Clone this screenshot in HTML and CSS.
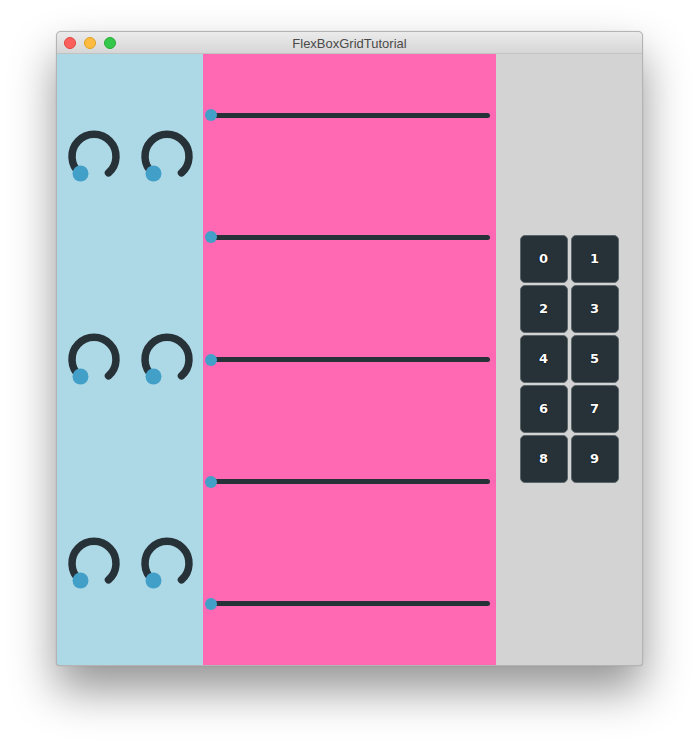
FILE: index.html
```html
<!DOCTYPE html>
<html>
<head>
<meta charset="utf-8">
<title>FlexBoxGridTutorial</title>
<link rel="stylesheet" href="styles.css">
</head>
<body>
<div class="window">
  <div class="titlebar">
    <div class="lights">
      <span class="light red"></span>
      <span class="light yellow"></span>
      <span class="light green"></span>
    </div>
    <div class="title">FlexBoxGridTutorial</div>
  </div>
  <div class="content">
    <div class="col knobs">
      <div class="cell"><svg class="knob" viewBox="0 0 60 60" width="60" height="60"><path d="M15.5 46.9 A22 22 0 1 1 44.5 46.9" /><circle cx="16.5" cy="47.5" r="8"/></svg></div>
      <div class="cell"><svg class="knob" viewBox="0 0 60 60" width="60" height="60"><path d="M15.5 46.9 A22 22 0 1 1 44.5 46.9" /><circle cx="16.5" cy="47.5" r="8"/></svg></div>
      <div class="cell"><svg class="knob" viewBox="0 0 60 60" width="60" height="60"><path d="M15.5 46.9 A22 22 0 1 1 44.5 46.9" /><circle cx="16.5" cy="47.5" r="8"/></svg></div>
      <div class="cell"><svg class="knob" viewBox="0 0 60 60" width="60" height="60"><path d="M15.5 46.9 A22 22 0 1 1 44.5 46.9" /><circle cx="16.5" cy="47.5" r="8"/></svg></div>
      <div class="cell"><svg class="knob" viewBox="0 0 60 60" width="60" height="60"><path d="M15.5 46.9 A22 22 0 1 1 44.5 46.9" /><circle cx="16.5" cy="47.5" r="8"/></svg></div>
      <div class="cell"><svg class="knob" viewBox="0 0 60 60" width="60" height="60"><path d="M15.5 46.9 A22 22 0 1 1 44.5 46.9" /><circle cx="16.5" cy="47.5" r="8"/></svg></div>
    </div>
    <div class="col sliders">
      <div class="slot"><div class="slider"><div class="track"></div><div class="thumb"></div></div></div>
      <div class="slot"><div class="slider"><div class="track"></div><div class="thumb"></div></div></div>
      <div class="slot"><div class="slider"><div class="track"></div><div class="thumb"></div></div></div>
      <div class="slot"><div class="slider"><div class="track"></div><div class="thumb"></div></div></div>
      <div class="slot"><div class="slider"><div class="track"></div><div class="thumb"></div></div></div>
    </div>
    <div class="col buttons">
      <div class="pad">
        <div class="btn">0</div><div class="btn">1</div>
        <div class="btn">2</div><div class="btn">3</div>
        <div class="btn">4</div><div class="btn">5</div>
        <div class="btn">6</div><div class="btn">7</div>
        <div class="btn">8</div><div class="btn">9</div>
      </div>
    </div>
  </div>
</div>
</body>
</html>
```
FILE: styles.css
```css
html, body {
  margin: 0;
  padding: 0;
  background: #ffffff;
}
body {
  box-sizing: border-box;
  min-height: 746px;
  padding: 31px 0 0 56px;
  font-family: "Liberation Sans", Arial, sans-serif;
}
.window {
  width: 585px;
  height: 633px;
  border: 1px solid #b4b4b4;
  border-radius: 5px 5px 4px 4px;
  overflow: hidden;
  display: flex;
  flex-direction: column;
  box-shadow: 0 24px 45px rgba(0, 0, 0, 0.42), 0 0 1px rgba(0,0,0,0.3);
  background: #d3d3d3;
}
.titlebar {
  height: 21px;
  flex: none;
  border-bottom: 1px solid #c2c2c2;
  background: linear-gradient(#ebebeb, #d6d6d6);
  position: relative;
  display: flex;
  align-items: center;
  justify-content: center;
}
.lights {
  position: absolute;
  left: 7px;
  top: 5px;
  display: flex;
  gap: 8px;
}
.light {
  width: 12px;
  height: 12px;
  border-radius: 50%;
  box-sizing: border-box;
}
.red { background: #fc605c; border: 1px solid #e0443e; }
.yellow { background: #fdbc40; border: 1px solid #dea123; }
.green { background: #34c84a; border: 1px solid #27aa35; }
.title {
  font-size: 13px;
  color: #4a4a4a;
  margin-top: 1px;
}
.content {
  flex: 1;
  display: flex;
}
.col {
  min-width: 0;
}
.knobs {
  flex: 146;
  background: #add8e6;
  display: grid;
  grid-template-columns: 1fr 1fr;
  grid-template-rows: 1fr 1fr 1fr;
}
.cell {
  display: flex;
  align-items: center;
  justify-content: center;
}
.knob {
  display: block;
}
.knob path {
  fill: none;
  stroke: #263238;
  stroke-width: 7.5;
  stroke-linecap: round;
}
.knob circle {
  fill: #42a0c8;
}
.sliders {
  flex: 293;
  background: #ff69b4;
  display: flex;
  flex-direction: column;
}
.slot {
  flex: 1;
  display: flex;
  align-items: center;
  padding: 0 6px 0 2px;
}
.slider {
  position: relative;
  flex: 1;
  height: 12px;
  display: flex;
  align-items: center;
}
.track {
  flex: 1;
  margin-left: 6px;
  height: 5px;
  border-radius: 3px;
  background: #263238;
}
.thumb {
  position: absolute;
  left: 0;
  top: 0;
  width: 12px;
  height: 12px;
  border-radius: 50%;
  background: #42a0c8;
}
.buttons {
  flex: 146;
  background: #d3d3d3;
  display: flex;
  align-items: center;
  justify-content: center;
  padding-bottom: 2px;
}
.pad {
  display: grid;
  grid-template-columns: 48px 48px;
  grid-auto-rows: 48px;
  gap: 2px 3px;
}
.btn {
  box-sizing: border-box;
  background: #263238;
  border: 1px solid #5b666b;
  border-radius: 5px;
  color: #ffffff;
  font-family: "DejaVu Sans", sans-serif;
  font-weight: bold;
  font-size: 13px;
  display: flex;
  align-items: center;
  justify-content: center;
  text-shadow: 0 0 1px #000, 0 0 1px #000;
}
```
